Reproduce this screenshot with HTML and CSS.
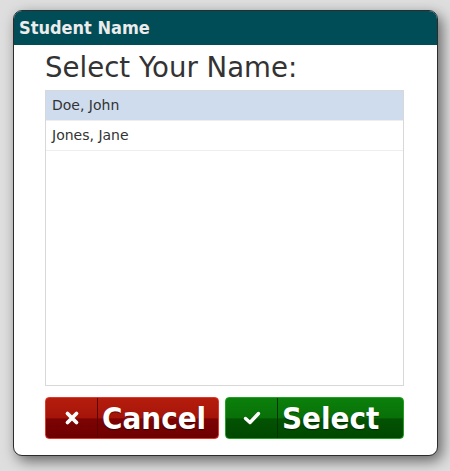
FILE: index.html
```html
<!DOCTYPE html>
<html>
<head>
<meta charset="utf-8">
<link rel="stylesheet" href="styles.css">
</head>
<body>
<div class="dialog">
  <div class="header">Student Name</div>
  <div class="content">
    <h1 class="title">Select Your Name:</h1>
    <div class="list">
      <div class="row selected">Doe, John</div>
      <div class="row">Jones, Jane</div>
    </div>
    <div class="buttons">
      <button class="btn cancel">
        <span class="icon">
          <svg width="16" height="16" viewBox="0 0 16 16"><path d="M3.5 3.5 L12.5 12.5 M12.5 3.5 L3.5 12.5" stroke="#fff" stroke-width="3.8" stroke-linecap="round"/></svg>
        </span>
        <span class="label">Cancel</span>
      </button>
      <button class="btn select">
        <span class="icon">
          <svg width="18" height="16" viewBox="0 0 18 16"><path d="M2.5 8.5 L7 12.5 L15.5 3.5" fill="none" stroke="#fff" stroke-width="3.4" stroke-linecap="round" stroke-linejoin="round"/></svg>
        </span>
        <span class="label">Select</span>
      </button>
    </div>
  </div>
</div>
</body>
</html>
```
FILE: styles.css
```css
html, body {
  margin: 0;
  padding: 0;
}
body {
  background: #dedede;
  width: 450px;
  height: 471px;
  overflow: hidden;
  font-family: "DejaVu Sans", Verdana, sans-serif;
}
.dialog {
  margin: 10px 0 0 13px;
  width: 423px;
  height: 444px;
  border: 1px solid #2c2c2c;
  border-radius: 9px;
  background: #fff;
  box-shadow: 4px 5px 14px rgba(0,0,0,0.55);
  overflow: hidden;
  display: flex;
  flex-direction: column;
}
.header {
  height: 34px;
  background: #004c57;
  color: #ececec;
  font-family: "DejaVu Sans Condensed", "DejaVu Sans", sans-serif;
  font-weight: bold;
  font-size: 18px;
  line-height: 34px;
  padding-left: 5px;
  box-sizing: border-box;
}
.content {
  padding: 0 33px 0 31px;
  display: flex;
  flex-direction: column;
}
.title {
  margin: 0;
  font-weight: normal;
  font-size: 27.6px;
  color: #333;
  height: 45px;
  line-height: 46px;
}
.list {
  height: 294px;
  border: 1px solid #d8d8d8;
}
.row {
  height: 29px;
  line-height: 29px;
  border-bottom: 1px solid #eee;
  font-size: 14px;
  color: #333;
  padding-left: 6px;
}
.row.selected {
  background: #cfdcee;
}
.buttons {
  margin-top: 11px;
  display: flex;
  gap: 6px;
}
.btn {
  height: 42px;
  border-radius: 4px;
  display: flex;
  align-items: stretch;
  padding: 0;
  font-family: "DejaVu Sans Condensed", "DejaVu Sans", sans-serif;
  font-weight: bold;
  font-size: 31px;
  color: #fff;
  text-shadow: 0 1px 1px rgba(0,0,0,0.5);
  cursor: pointer;
}
.btn .icon {
  width: 51px;
  display: flex;
  align-items: center;
  justify-content: center;
}
.btn .label {
  display: flex;
  align-items: center;
  padding-left: 4px;
}
.cancel {
  width: 174px;
  border: 1px solid #e0392b;
  background: linear-gradient(to bottom, #b51d0c 0%, #a5140a 50%, #7d0303 52%, #6e0000 100%);
}
.cancel .icon {
  border-right: 1px solid #5a0000;
}
.select {
  width: 179px;
  border: 1px solid #1fa21f;
  background: linear-gradient(to bottom, #0b800b 0%, #087008 50%, #035303 52%, #004800 100%);
}
.select .icon {
  border-right: 1px solid #003300;
}
```
